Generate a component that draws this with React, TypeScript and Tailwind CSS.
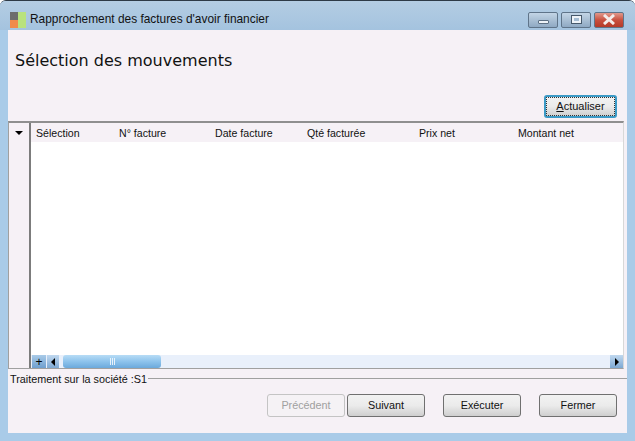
const labelFont = "font-['Liberation_Sans',sans-serif] text-[10.8px] text-[#111]";

function WizardButton({ label, disabled, w = "w-[78px]" }: { label: string; disabled?: boolean; w?: string }) {
  if (disabled) {
    return (
      <div className={`${w} h-[23px] flex items-center justify-center rounded-[3px] border border-[#c4c4c4] bg-[#f5f2f5] font-['Liberation_Sans',sans-serif] text-[10.8px] text-[#a0a0a0]`}>
        {label}
      </div>
    );
  }
  return (
    <div className={`${w} h-[23px] flex items-center justify-center rounded-[3px] border border-[#707070] bg-gradient-to-b from-[#f2f2f2] via-[#ebebeb] to-[#cfcfcf] ${labelFont}`}>
      {label}
    </div>
  );
}

function Caption({ children, cls, red }: { children: React.ReactNode; cls: string; red?: boolean }) {
  return (
    <div
      className={`${cls} h-[16px] flex items-center justify-center rounded-[2px] border border-[#5f7489] ${
        red
          ? "bg-gradient-to-b from-[#e0988c] via-[#c9503f] to-[#b53a28]"
          : "bg-gradient-to-b from-[#c3d5e6] via-[#a9bfd4] to-[#8fa9c3]"
      }`}
    >
      {children}
    </div>
  );
}

function Column({ label, cls }: { label: string; cls: string }) {
  return <div className={`${cls} shrink-0 font-['Liberation_Sans',sans-serif] text-[10.6px] text-[#111]`}>{label}</div>;
}

export default function App() {
  return (
    <div className="w-[635px] h-[441px] flex flex-col overflow-hidden bg-[#a9cbe8] rounded-t-[6px] border-t border-[#2e3a46]">
      <div className="h-[29px] shrink-0 flex items-center pt-[8px] pl-[10px] pr-[11px] bg-gradient-to-b from-[#b4cde3] to-[#a4c3df]">
        <div className="w-4 h-4 grid grid-cols-2 mr-[4px]">
          <div className="flex flex-col">
            <div className="h-2 bg-[#6d6d6d]" />
            <div className="h-2 bg-[#f08a4b]" />
          </div>
          <div className="bg-[#b9e27e]" />
        </div>
        <div className="font-['Liberation_Sans',sans-serif] text-[11.9px] text-[#111]">
          Rapprochement des factures d'avoir financier
        </div>
        <div className="ml-auto flex gap-[3px]">
          <Caption cls="w-[30px]">
            <div className="w-[11px] h-[4px] mt-[4px] rounded-[1px] bg-[#eef3f8] border border-[#5c6f83]" />
          </Caption>
          <Caption cls="w-[30px]">
            <div className="w-[11px] h-[9px] bg-[#eef3f8] border border-[#47596b] flex items-center justify-center">
              <div className="w-[5px] h-[3px] bg-[#a6bdd3]" />
            </div>
          </Caption>
          <Caption cls="w-[30px]" red>
            <svg width="14" height="11" viewBox="0 0 14 11">
              <path d="M2 1 L12 10 M12 1 L2 10" stroke="#f4ecea" strokeWidth="3" />
            </svg>
          </Caption>
        </div>
      </div>

      <div className="mx-[8px] h-[403px] shrink-0 flex flex-col bg-[#f6f1f6]">
        <div className="h-[65px] shrink-0 pl-[7px] pt-[21px] font-['DejaVu_Sans',sans-serif] text-[16px] leading-[19px] text-[#111]">
          Sélection des mouvements
        </div>
        <div className="h-[26px] shrink-0 flex justify-end pr-[10px]">
          <div className="w-[73px] h-[23px] flex items-center justify-center rounded-[3px] border-2 border-[#3c9ac6] bg-gradient-to-b from-[#f2f2f2] via-[#ebebeb] to-[#cfcfcf] font-['Liberation_Sans',sans-serif] text-[11px] text-[#111] outline-1 -outline-offset-3 outline-dotted outline-[#333]">
            <span>
              <span className="underline">A</span>ctualiser
            </span>
          </div>
        </div>

        <div className="h-[248px] shrink-0 mr-[3px] flex border-t-2 border-b border-r border-l border-t-[#8f8f8f] border-b-[#a0a0a0] border-r-[#d8d8d8] border-l-[#a0a0a0] bg-white">
          <div className="w-[22px] shrink-0 flex flex-col bg-[#f6f1f6] border-r-2 border-[#7c7c7c]">
            <div className="h-[19px] flex items-center justify-center">
              <div className="w-0 h-0 border-x-[4px] border-x-transparent border-t-[4px] border-t-black" />
            </div>
          </div>
          <div className="flex-1 min-w-0 flex flex-col">
            <div className="h-[19px] shrink-0 flex items-center pt-[3px] pl-[5px] bg-[#f6f1f6]">
              <Column label="Sélection" cls="w-[83px]" />
              <Column label="N° facture" cls="w-[96px]" />
              <Column label="Date facture" cls="w-[92px]" />
              <Column label="Qté facturée" cls="w-[112px]" />
              <Column label="Prix net" cls="w-[99px]" />
              <Column label="Montant net" cls="w-[80px]" />
            </div>
            <div className="flex-1" />
            <div className="h-[13px] shrink-0 flex items-center pl-[1px] bg-[#e9f0fb]">
              <div className="w-[14px] h-full flex items-center justify-center bg-gradient-to-b from-[#a9cbe8] to-[#6f9fcf] text-black font-['Liberation_Sans',sans-serif] text-[12px] leading-none">
                +
              </div>
              <div className="ml-[1px] w-[12px] h-full flex items-center justify-center bg-gradient-to-b from-[#c0d8ef] to-[#7ea9d3]">
                <div className="w-0 h-0 border-y-[4px] border-y-transparent border-r-[4px] border-r-black" />
              </div>
              <div className="ml-[4px] w-[98px] h-[13px] rounded-[3px] flex items-center justify-center gap-[1px] bg-gradient-to-b from-[#b7dcf6] via-[#8dc3ec] to-[#6ba9dc]">
                <div className="w-px h-[7px] bg-[#e8f2fa]" />
                <div className="w-px h-[7px] bg-[#e8f2fa]" />
                <div className="w-px h-[7px] bg-[#e8f2fa]" />
              </div>
              <div className="ml-auto w-[13px] h-full flex items-center justify-center bg-gradient-to-b from-[#c0d8ef] to-[#7ea9d3]">
                <div className="w-0 h-0 border-y-[4px] border-y-transparent border-l-[4px] border-l-black" />
              </div>
            </div>
          </div>
        </div>

        <div className="h-[3px] shrink-0" />
        <div className="h-[14px] shrink-0 flex items-center pl-[2px]">
          <span className="font-['Liberation_Sans',sans-serif] text-[10.8px] text-[#111] whitespace-nowrap">
            Traitement sur la société :S1
          </span>
          <div className="flex-1 ml-[1px] -mt-[2px] h-px bg-[#a0a0a0]" />
        </div>
        <div className="flex pt-[8px] pl-[259px]">
          <WizardButton label="Précédent" disabled />
          <div className="w-[2px]" />
          <WizardButton label="Suivant" />
          <div className="w-[18px]" />
          <WizardButton label="Exécuter" />
          <div className="w-[18px]" />
          <WizardButton label="Fermer" />
        </div>
      </div>
    </div>
  );
}
